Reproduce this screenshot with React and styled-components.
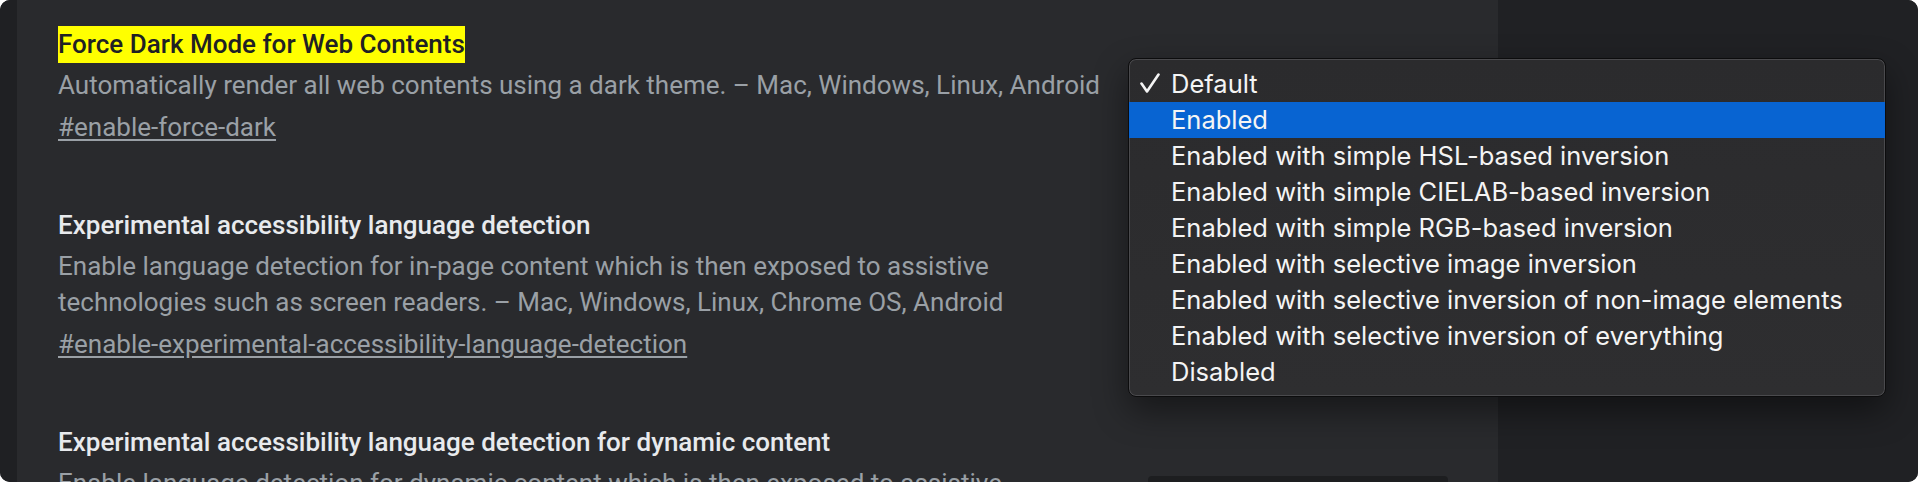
import React from "react";
import styled, { createGlobalStyle } from "styled-components";

const GlobalStyle = createGlobalStyle`
  html, body { margin: 0; padding: 0; background: #ffffff; }
  #root { width: 1918px; height: 482px; }
`;

const Window = styled.div`
  position: relative;
  width: 1918px;
  height: 482px;
  border-radius: 10px;
  overflow: hidden;
  display: flex;
  background: #202124;
`;

const LeftStrip = styled.div`
  width: 17px;
  flex: none;
  background: #1f2023;
`;

const Panel = styled.main`
  width: 1481px;
  flex: none;
  box-sizing: border-box;
  background: #292a2d;
  padding: 26px 50px 0 41px;
  overflow: hidden;
  display: flex;
  flex-direction: column;
  gap: 62px;
`;

const RightArea = styled.aside`
  flex: 1;
  background: #202124;
`;

const Experiment = styled.section`
  display: flex;
  align-items: center;
  gap: 30px;
`;

const TextColumn = styled.div`
  width: 1060px;
  flex: none;
  font-family: Roboto, "Liberation Sans", sans-serif;
`;

const Title = styled.h2`
  margin: 0;
  font-size: 26px;
  font-weight: 500;
  line-height: 37px;
  color: #e8eaed;
`;

const Highlight = styled.span`
  display: inline-block;
  background: #ffff00;
  color: #202124;
`;

const Description = styled.p`
  margin: 4px 0 0;
  font-size: 26px;
  font-weight: 400;
  line-height: 36px;
  color: #9aa0a6;
`;

const Permalink = styled.a`
  display: inline-block;
  margin-top: 6px;
  font-size: 26px;
  line-height: 36px;
  color: #9aa0a6;
  text-decoration: underline;
  text-underline-offset: 3px;
`;

const SelectBox = styled.div`
  width: 300px;
  height: 52px;
  flex: none;
  border-radius: 4px;
  background: #1d1e20;
`;

const Menu = styled.ul`
  position: absolute;
  left: 1128px;
  top: 58px;
  width: 758px;
  height: 339px;
  box-sizing: border-box;
  margin: 0;
  padding: 7px 0 0;
  list-style: none;
  border-radius: 8px;
  background: linear-gradient(180deg, #2b2b2d 0%, #2e2e30 100%);
  border: 1px solid #0c0c0d;
  box-shadow: inset 0 0 0 1px #4a4a4d, 0 14px 34px rgba(0, 0, 0, 0.45);
  font-family: Inter, "Noto Sans", sans-serif;
`;

const MenuItem = styled.li`
  position: relative;
  height: 36px;
  line-height: 36px;
  padding-left: 42px;
  font-size: 25.5px;
  font-weight: 400;
  color: #f4f4f4;
  background: ${(p) => (p.$active ? "#0864d2" : "transparent")};
  white-space: nowrap;
`;

const Check = styled.svg`
  position: absolute;
  left: 11px;
  top: 7px;
  width: 20px;
  height: 20px;
`;

const options = [
  "Default",
  "Enabled",
  "Enabled with simple HSL-based inversion",
  "Enabled with simple CIELAB-based inversion",
  "Enabled with simple RGB-based inversion",
  "Enabled with selective image inversion",
  "Enabled with selective inversion of non-image elements",
  "Enabled with selective inversion of everything",
  "Disabled",
];

const experiments = [
  {
    name: "Force Dark Mode for Web Contents",
    highlighted: true,
    desc: "Automatically render all web contents using a dark theme. – Mac, Windows, Linux, Android",
    link: "#enable-force-dark",
  },
  {
    name: "Experimental accessibility language detection",
    desc: "Enable language detection for in-page content which is then exposed to assistive technologies such as screen readers. – Mac, Windows, Linux, Chrome OS, Android",
    link: "#enable-experimental-accessibility-language-detection",
  },
  {
    name: "Experimental accessibility language detection for dynamic content",
    desc: "Enable language detection for dynamic content which is then exposed to assistive technologies such as screen readers. – Mac, Windows, Linux, Chrome OS, Android",
    link: "#enable-experimental-accessibility-language-detection-dynamic",
  },
];

export default function App() {
  return (
    <>
      <GlobalStyle />
      <Window>
        <LeftStrip />
        <Panel>
          {experiments.map((e) => (
            <Experiment key={e.link}>
              <TextColumn>
                <Title>{e.highlighted ? <Highlight>{e.name}</Highlight> : e.name}</Title>
                <Description>{e.desc}</Description>
                <Permalink href={e.link}>{e.link}</Permalink>
              </TextColumn>
              <SelectBox />
            </Experiment>
          ))}
        </Panel>
        <RightArea />
        <Menu>
          {options.map((o, i) => (
            <MenuItem key={o} $active={i === 1}>
              {i === 0 && (
                <Check viewBox="0 0 20 20" fill="none">
                  <path d="M1.5 10.5 L7 18.5 L18.5 1.5" stroke="#f4f4f4" strokeWidth="2.6" strokeLinecap="round" strokeLinejoin="round" />
                </Check>
              )}
              {o}
            </MenuItem>
          ))}
        </Menu>
      </Window>
    </>
  );
}
